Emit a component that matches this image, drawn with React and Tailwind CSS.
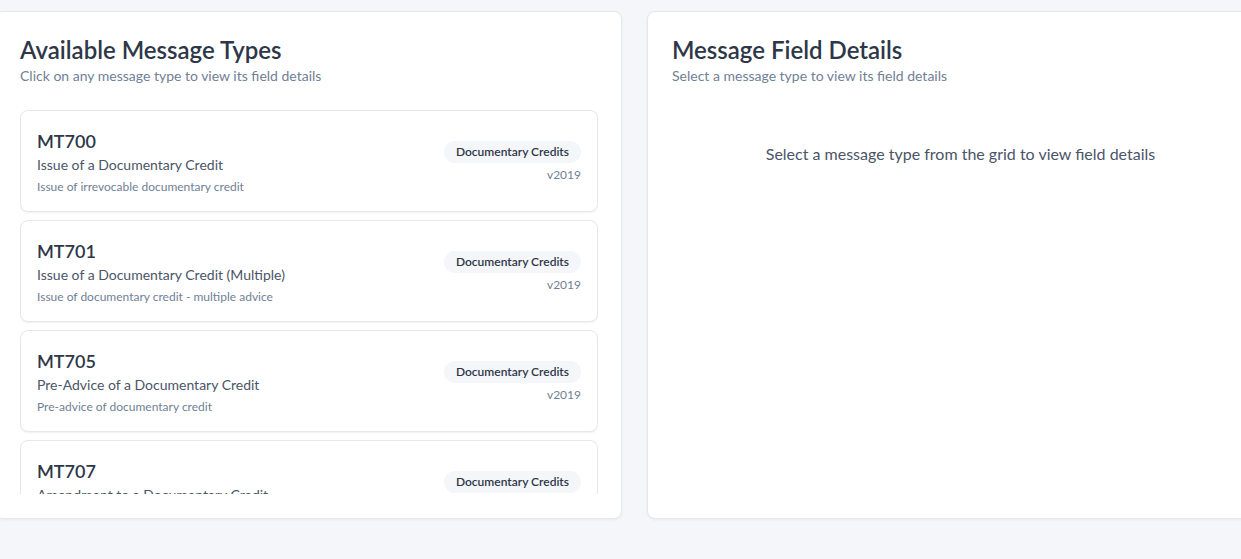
import React from "react";

const items = [
  { code: "MT700", name: "Issue of a Documentary Credit", desc: "Issue of irrevocable documentary credit" },
  { code: "MT701", name: "Issue of a Documentary Credit (Multiple)", desc: "Issue of documentary credit - multiple advice" },
  { code: "MT705", name: "Pre-Advice of a Documentary Credit", desc: "Pre-advice of documentary credit" },
  { code: "MT707", name: "Amendment to a Documentary Credit", desc: "Amendment to documentary credit" },
  { code: "MT710", name: "Advice of a Third Bank's Documentary Credit", desc: "Advice of third bank's documentary credit" },
];

function Card({ it }) {
  return (
    <div className="flex items-center justify-between rounded-lg border border-[#e5e7eb] bg-white p-4 shadow-[0_1px_2px_rgba(0,0,0,0.06)] shrink-0">
      <div className="flex flex-col">
        <div className="text-lg leading-7 font-semibold text-[#2d3748]">{it.code}</div>
        <div className="text-sm leading-5 text-[#4a5568]">{it.name}</div>
        <div className="mt-1 text-xs leading-4 text-[#718096]">{it.desc}</div>
      </div>
      <div className="flex flex-col items-end pt-[2px]">
        <span className="rounded-full bg-[#f4f6f9] px-3 py-[3px] text-xs leading-4 font-semibold text-[#2d3748]">Documentary Credits</span>
        <span className="mt-1 text-xs leading-4 text-[#718096]">v2019</span>
      </div>
    </div>
  );
}

export default function App() {
  return (
    <div
      className="h-[559px] w-full overflow-hidden bg-[#f4f6f9]"
      style={{ fontFamily: 'Lato, "Noto Sans", sans-serif' }}
    >
      <div className="-ml-[5px] flex gap-[25px] pt-[11px]">
        <div className="w-[627px] shrink-0 rounded-lg border border-[#e5e7eb] bg-white py-6 pl-6 pr-[23px] shadow-[0_1px_3px_rgba(0,0,0,0.05)]">
          <h2 className="text-2xl leading-7 font-semibold text-[#2d3748]">Available Message Types</h2>
          <p className="mt-[2px] text-sm leading-5 text-[#718096]">Click on any message type to view its field details</p>
          <div className="mt-6 flex h-96 flex-col gap-2 overflow-y-auto [scrollbar-width:none]">
            {items.map((it) => (
              <Card key={it.code} it={it} />
            ))}
          </div>
        </div>
        <div className="w-[627px] shrink-0 rounded-lg border border-[#e5e7eb] bg-white p-6 shadow-[0_1px_3px_rgba(0,0,0,0.05)]">
          <h2 className="text-2xl leading-7 font-semibold text-[#2d3748]">Message Field Details</h2>
          <p className="mt-[2px] text-sm leading-5 text-[#718096]">Select a message type to view its field details</p>
          <div className="mt-6 py-8 text-center text-base leading-6 text-[#4a5568]">
            Select a message type from the grid to view field details
          </div>
        </div>
      </div>
    </div>
  );
}
